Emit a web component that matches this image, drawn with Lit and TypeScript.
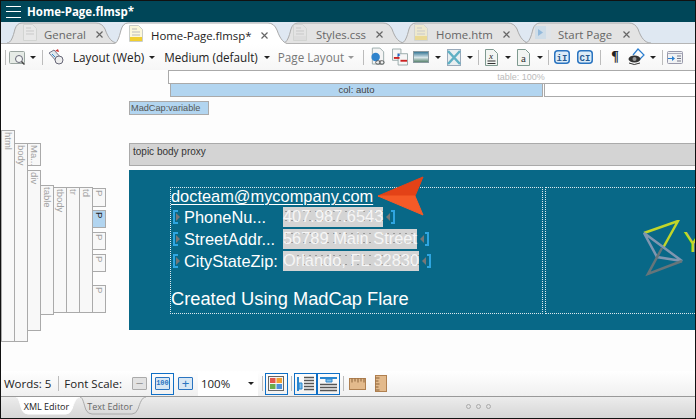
import { LitElement, html, css, svg } from "lit";
import { customElement } from "lit/decorators.js";

const doc = (fill = "#f4f4f4") => svg`<path d="M2.5.5h8l4 4v13h-12z" fill="${fill}" stroke="#9aa" />`;

const icons = {
  find: html`<svg width="17" height="15" viewBox="0 0 17 15"><rect x=".5" y="1.5" width="15" height="12" rx="1" fill="#e6ebe6" stroke="#9aa5a0"/><circle cx="10" cy="9" r="3.5" fill="#f4f6f4" stroke="#667"/><path d="M12.5 11.5l3 3" stroke="#444" stroke-width="1.5"/></svg>`,
  wand: html`<svg width="17" height="18" viewBox="0 0 17 18"><path d="M1 5l5-3 8 9-4 4z" fill="#dfe8ee" stroke="#778"/><circle cx="11" cy="12" r="4" fill="#eee" stroke="#667"/><path d="M7 3l3-2 1 3z" fill="#c33"/><path d="M4 6l3 3" stroke="#38c"/></svg>`,
  link: html`<svg width="16" height="20" viewBox="0 0 17 20">${doc()}<circle cx="6" cy="10" r="4.5" fill="#2f83cc"/><rect x="6" y="14" width="5" height="3.6" rx="1.8" fill="none" stroke="#555"/><rect x="10" y="14" width="5" height="3.6" rx="1.8" fill="none" stroke="#555"/></svg>`,
  xref: html`<svg width="16" height="18" viewBox="0 0 17 18"><path d="M.5.5h9v12h-9z" fill="#f6f6f6" stroke="#9aa"/><path d="M6.5 5.5h10v12h-10z" fill="#f6f6f6" stroke="#9aa"/><path d="M2 10h6" stroke="#c22" stroke-width="2"/><path d="M9 13h7" stroke="#c22" stroke-width="2"/><path d="M6 5l3 2-3 2z" fill="#26c"/></svg>`,
  image: html`<svg width="16" height="12" viewBox="0 0 16 12"><defs><linearGradient id="sky" x1="0" y1="0" x2="0" y2="1"><stop offset="0" stop-color="#2a6f8f"/><stop offset=".55" stop-color="#d8e6ea"/><stop offset="1" stop-color="#4d7a62"/></linearGradient></defs><rect x=".5" y=".5" width="15" height="11" fill="url(#sky)" stroke="#8a9aa0"/></svg>`,
  media: html`<svg width="14" height="17" viewBox="0 0 14 17"><rect x=".5" y=".5" width="13" height="16" fill="#e8eef0" stroke="#9ab"/><path d="M1 2l12 13M13 2L1 15" stroke="#5fb0c4" stroke-width="2.5"/></svg>`,
  xdoc: html`<svg width="13" height="17" viewBox="0 0 13 17"><path d="M.5.5h8l4 4v12h-12z" fill="#f2f5f2" stroke="#7f9a90"/><text x="6" y="10" font-size="9" text-anchor="middle" font-family="Liberation Serif" font-style="italic" fill="#222">x</text><path d="M2.5 12h8M2.5 14.5h8" stroke="#333"/></svg>`,
  adoc: html`<svg width="13" height="17" viewBox="0 0 13 17"><path d="M.5.5h8l4 4v12h-12z" fill="#f2f5f2" stroke="#7f9a90"/><text x="6.5" y="13" font-size="11" text-anchor="middle" font-family="Liberation Serif" fill="#333">a</text></svg>`,
  inline: html`<svg width="16" height="14" viewBox="0 0 16 14"><rect x=".75" y=".75" width="14.5" height="12.5" rx="3" fill="#dcecf8" stroke="#2a74c0" stroke-width="1.5"/><text x="8" y="10.5" font-size="9" font-weight="700" text-anchor="middle" font-family="Liberation Mono" fill="#26588f">iI</text></svg>`,
  block: html`<svg width="16" height="14" viewBox="0 0 16 14"><rect x=".75" y=".75" width="14.5" height="12.5" rx="3" fill="#dcecf8" stroke="#2a74c0" stroke-width="1.5"/><text x="8" y="10.5" font-size="9" font-weight="700" text-anchor="middle" font-family="Liberation Mono" fill="#26588f">CI</text></svg>`,
  eye: html`<svg width="17" height="19" viewBox="0 0 17 19"><path d="M5 7l5-6 6 6-5 5" fill="none" stroke="#2b7ed0" stroke-width="1.2"/><ellipse cx="6.5" cy="11" rx="6" ry="3.5" fill="#333"/><circle cx="6.5" cy="11" r="2" fill="#999"/><path d="M1 15q5 3 11 0" fill="none" stroke="#333"/></svg>`,
  panel: html`<svg width="16" height="13" viewBox="0 0 16 13"><rect x=".5" y=".5" width="15" height="12" rx="1" fill="#f0f2f4" stroke="#99a"/><path d="M.5 2.5h15" stroke="#aab"/><path d="M1 7h4V5l3 2.5L5 10V8H1z" fill="#2a7fd0"/><path d="M10 5h4M10 7.5h4M10 10h4" stroke="#778"/></svg>`,
  grid: html`<svg width="16" height="15" viewBox="0 0 16 15"><rect x=".5" y=".5" width="15" height="14" fill="#f4f4f4" stroke="#666"/><rect x="2" y="2" width="5.5" height="5" fill="#e2574c"/><rect x="8.5" y="2" width="5.5" height="5" fill="#f0a030"/><rect x="2" y="8" width="5.5" height="5" fill="#6aab4c"/><rect x="8.5" y="8" width="5.5" height="5" fill="#4c8fdb"/></svg>`,
  rowTree: html`<svg width="19" height="16" viewBox="0 0 19 16"><path d="M1 1h2v14H1z" fill="#2a86d0"/><path d="M3 7h3v6H3z" fill="#7fc0ea" stroke="#2a86d0"/><path d="M8 1.5h10M8 4.5h10M8 7.5h10M8 10.5h10M8 13.5h10" stroke="#555" stroke-width="1.6"/></svg>`,
  colTree: html`<svg width="19" height="16" viewBox="0 0 19 16"><path d="M1 1h17v2H1z" fill="#2a86d0"/><path d="M7 3h6v3H7z" fill="#7fc0ea" stroke="#2a86d0"/><path d="M1 8.5h17M1 11.5h17M1 14.5h17" stroke="#555" stroke-width="1.6"/></svg>`,
  rulerH: html`<svg width="17" height="12" viewBox="0 0 17 12"><rect x=".5" y=".5" width="16" height="11" fill="#e3ba8c" stroke="#b08050"/><path d="M3 .5v4M6 .5v3M9 .5v4M12 .5v3M15 .5v4" stroke="#8a6238"/></svg>`,
  rulerV: html`<svg width="12" height="17" viewBox="0 0 12 17"><rect x=".5" y=".5" width="11" height="16" fill="#e3ba8c" stroke="#b08050"/><path d="M.5 3h4M.5 6h3M.5 9h4M.5 12h3M.5 15h4" stroke="#8a6238"/></svg>`,
  close: html`<svg width="7" height="7" viewBox="0 0 7 7"><path d="M.5.5l6 6M6.5.5l-6 6" stroke="#666" stroke-width="1.2"/></svg>`,
};

const tabDoc = (fill: string, band: string) =>
  html`<svg width="14" height="17" viewBox="0 0 14 17"><path d="M.5.5h9l4 4v12H.5z" fill="${fill}" stroke="#c9cdc9"/><path d="M3 4h5M3 7h8M3 10h8" stroke="#bbb"/><rect x="1" y="12" width="12" height="4" fill="${band}"/></svg>`;

const startIcon = html`<svg width="16" height="13" viewBox="0 0 16 13"><rect width="16" height="13" fill="#c5daec"/><rect x="11" width="5" height="13" fill="#dfe6ec"/><path d="M3 3l5 3.5L3 10z" fill="#6aa5d8"/></svg>`;

// outline of a document tab, stretched to whatever box it sits in
const tabShape = (w: number, h: number, fill: string, stroke: string) =>
  html`<svg class="shape" viewBox="0 0 ${w} ${h}" preserveAspectRatio="none">
    <path
      d="M0 ${h}C4 ${h} 6 ${h - 6} 8 ${h - 14}Q10 1 15 1H${w - 22}Q${w - 16} 1 ${w - 13} ${h - 14}C${w - 10} ${h - 5} ${w - 6} ${h} ${w} ${h}"
      fill="${fill}"
      stroke="${stroke}"
    />
  </svg>`;

const bottomShape = (w: number, fill: string, stroke: string) =>
  html`<svg class="shape" viewBox="0 0 ${w} 18" preserveAspectRatio="none">
    <path d="M0 0C3 0 4 8 6 13Q8 17 12 17H${w - 14}Q${w - 10} 17 ${w - 8} 12C${w - 6} 6 ${w - 4} 0 ${w} 0" fill="${fill}" stroke="${stroke}" />
  </svg>`;

const DOC_TABS = [
  { name: "General", width: 111, overlap: 0, pad: 16, gap: 7, right: 15, icon: tabDoc("#ececec", "#ececec") },
  { name: "Home-Page.flmsp*", width: 177, overlap: 5, pad: 16, gap: 8, right: 22, icon: tabDoc("#fbf7da", "#f1cf2f"), on: true },
  { name: "Styles.css", width: 122, overlap: 7, pad: 10, gap: 9, right: 22, icon: tabDoc("#e4e4e4", "#d9d9d9") },
  { name: "Home.htm", width: 129, overlap: 4, pad: 13, gap: 8, right: 20, icon: tabDoc("#f3ecc4", "#eed56c") },
  { name: "Start Page", width: 126, overlap: 5, pad: 10, gap: 7, right: 21, icon: startIcon },
];

// [label, left, top, width, height, selected]
const CRUMBS: Array<[string, number, number, number, number, boolean?]> = [
  ["html", 1, 60, 14, 212],
  ["body", 14, 73, 14, 199],
  ["Ma...", 27, 73, 14, 23],
  ["div", 27, 100, 14, 161],
  ["table", 40, 115, 14, 130],
  ["tbody", 53, 117, 14, 126],
  ["tr", 66, 117, 14, 126],
  ["td", 79, 117, 14, 126],
  ["P", 92, 118, 14, 19],
  ["P", 92, 140, 14, 18, true],
  ["P", 92, 162, 14, 18],
  ["P", 92, 184, 14, 18],
  ["P", 92, 215, 14, 28],
];

const FIELDS = [
  ["PhoneNu...", "407.987.6543"],
  ["StreetAddr...", "56789 Main Street"],
  ["CityStateZip:", "Orlando, FL 32830"],
];

@customElement("app-root")
export class AppRoot extends LitElement {
  static styles = css`
    :host {
      display: block;
      width: 696px;
      height: 419px;
      overflow: hidden;
      background: #fdfdfd;
      font-family: "Open Sans", "Noto Sans", sans-serif;
      color: #222;
    }
    .frame {
      height: 419px;
      display: flex;
      flex-direction: column;
      border: 1px solid #111;
      box-sizing: border-box;
      position: relative;
      overflow: hidden;
    }
    .title {
      height: 21px;
      flex: none;
      background: #004658;
      color: #fff;
      display: flex;
      align-items: center;
      gap: 6px;
      padding-left: 5px;
      font: 700 11.5px "Open Sans", sans-serif;
    }
    .burger {
      width: 15px;
      height: 12px;
      border-top: 1px solid #fff;
      border-bottom: 1px solid #fff;
      position: relative;
      box-sizing: border-box;
    }
    .burger::after {
      content: "";
      position: absolute;
      left: 0;
      right: 0;
      top: 4px;
      height: 1px;
      background: #fff;
    }
    .tabs {
      height: 22px;
      flex: none;
      background: #dfe8f2;
      border-bottom: 1px solid #b5b5b5;
      display: flex;
      align-items: flex-start;
      padding-left: 6px;
      box-sizing: border-box;
      font-size: 11.4px;
    }
    .tab {
      display: flex;
      align-items: center;
      flex: none;
      height: 21px;
      color: #666;
      box-sizing: border-box;
      position: relative;
      white-space: nowrap;
    }
    .tab.on {
      color: #222;
      height: 22px;
      z-index: 1;
    }
    .tab > * {
      position: relative;
      top: 2px;
    }
    .tab > .shape,
    .btab > .shape {
      position: absolute;
      left: 0;
      top: 0;
      width: 100%;
      height: 100%;
    }
    .tab > .ico {
      display: flex;
      opacity: 0.65;
      top: 0;
    }
    .tab.on > .ico {
      opacity: 1;
    }
    .tab > .x {
      display: flex;
      margin-left: auto;
    }
    .toolbar {
      height: 26px;
      flex: none;
      background: linear-gradient(#fff, #f6f6f6);
      display: flex;
      align-items: center;
      font-size: 11.7px;
      white-space: nowrap;
    }
    .slot {
      display: flex;
      align-items: center;
      flex: none;
    }
    .sep {
      width: 1px;
      height: 15px;
      background: #bcbcbc;
      flex: none;
    }
    .caret {
      width: 0;
      height: 0;
      border: 3px solid transparent;
      border-top: 3px solid #222;
      border-bottom: 0;
      flex: none;
    }
    .caret.dim {
      border-top-color: #999;
    }
    .muted {
      color: #777;
    }
    .pilcrow {
      width: 10px;
      justify-content: center;
      font: 700 14px "Liberation Serif", serif;
    }
    .stage {
      flex: 1;
      position: relative;
      margin-left: -1px;
      background: #fdfdfd;
      font-family: "Liberation Sans", Arial, sans-serif;
    }
    .proxy {
      position: absolute;
      box-sizing: border-box;
      font-size: 10px;
      border: 1px solid #aaa;
      color: #444;
      white-space: nowrap;
    }
    .table-bar {
      left: 168px;
      top: 0;
      width: 706px;
      height: 14px;
      background: #fff;
      color: #bbb;
      font-size: 9px;
      text-align: center;
      line-height: 13px;
    }
    .col-a {
      left: 170px;
      top: 13px;
      width: 373px;
      height: 14px;
      background: #b2d5f0;
      text-align: center;
      line-height: 12px;
      font-size: 9.5px;
    }
    .col-b {
      left: 544px;
      top: 13px;
      width: 160px;
      height: 14px;
      background: #fff;
    }
    .var {
      left: 129px;
      top: 31px;
      width: 80px;
      height: 14px;
      background: #b2d5f0;
      line-height: 12px;
      padding-left: 1px;
      color: #555;
      font-size: 9.2px;
    }
    .body-bar {
      left: 129px;
      top: 73px;
      width: 575px;
      height: 23px;
      background: #d4d4d4;
      line-height: 16px;
      padding-left: 3px;
      color: #333;
    }
    .crumb {
      position: absolute;
      box-sizing: border-box;
      background: #f8f8f8;
      border: 1px solid #aaa;
      color: #a0a0a0;
      font-size: 9.5px;
      writing-mode: vertical-rl;
      padding-top: 1px;
      line-height: 11px;
      white-space: nowrap;
      overflow: hidden;
    }
    .crumb.sel {
      background: #b2d5f0;
      color: #222;
    }
    .banner {
      position: absolute;
      left: 129px;
      top: 100px;
      width: 575px;
      height: 160px;
      background: #086887;
      color: #fff;
    }
    .cell {
      position: absolute;
      top: 17px;
      height: 127px;
      box-sizing: border-box;
      border: 1px dotted #dfe9ee;
    }
    .cell.a {
      left: 41px;
      width: 373px;
    }
    .cell.b {
      left: 416px;
      width: 170px;
    }
    .content {
      position: absolute;
      left: 42px;
      top: 17px;
      display: flex;
      flex-direction: column;
      font-size: 16.4px;
    }
    .email {
      line-height: 19px;
      text-decoration: underline;
      text-underline-offset: 2px;
      text-decoration-thickness: 1px;
      white-space: nowrap;
    }
    .row {
      display: flex;
      align-items: center;
      height: 22px;
    }
    .bracket {
      display: flex;
      align-items: center;
      width: 5px;
      height: 14px;
      border: 2px solid #2fa5e0;
      box-sizing: border-box;
      border-right: 0;
      margin-left: 2px;
      flex: none;
    }
    .bracket.end {
      border-right: 2px solid #2fa5e0;
      border-left: 0;
      margin-left: 0;
      width: 4px;
    }
    .tri {
      width: 0;
      height: 0;
      flex: none;
      border: 4px solid transparent;
      border-left: 4px solid #777;
      border-right: 0;
      margin-left: 1px;
    }
    .tri.end {
      border-left: 0;
      border-right: 4px solid #777;
      margin: 0 1px 0 3px;
    }
    .lab {
      width: 99px;
      margin-left: 6px;
      flex: none;
      white-space: nowrap;
    }
    .val {
      background-color: #d4d4d4;
      background-image: radial-gradient(#9a9a9a 0.5px, transparent 0.7px);
      background-size: 6px 9px;
      height: 20px;
      line-height: 19px;
      white-space: nowrap;
      color: #f6f6f6;
    }
    .made {
      font-size: 18.3px;
      margin-top: 16px;
      line-height: 22px;
      white-space: nowrap;
    }
    .pointer,
    .logo {
      position: absolute;
    }
    .pointer {
      left: 376px;
      top: 175px;
    }
    .logo {
      left: 640px;
      top: 219px;
    }
    .status {
      height: 25px;
      flex: none;
      background: linear-gradient(#fff, #f0f0f0);
      display: flex;
      align-items: center;
      font-size: 11.5px;
      white-space: nowrap;
    }
    .btn {
      box-sizing: border-box;
      width: 23px;
      height: 22px;
      display: flex;
      align-items: center;
      justify-content: center;
      flex: none;
    }
    .btn.act {
      border: 1px solid #0f6fc6;
    }
    .sq {
      width: 15px;
      height: 13px;
      box-sizing: border-box;
      border: 1px solid #2a74c0;
      background: #d8e7f4;
      border-radius: 1px;
      display: flex;
      align-items: center;
      justify-content: center;
      color: #2a74c0;
      font: 13px/1 "Liberation Sans", sans-serif;
    }
    .sq.off {
      border-color: #aaa;
      background: #e2e2e2;
      color: #999;
    }
    .sq.on {
      font: 700 7px/1 "Liberation Mono", monospace;
    }
    .zoom {
      width: 60px;
      height: 24px;
      background: #fff;
      display: flex;
      align-items: center;
      justify-content: space-between;
      padding: 0 4px 0 3px;
      box-sizing: border-box;
      flex: none;
    }
    .bottom {
      height: 22px;
      flex: none;
      background: linear-gradient(#ececec, #d6d6d6);
      border-top: 1px solid #999;
      box-sizing: border-box;
      display: flex;
      align-items: flex-start;
      padding-left: 15px;
      position: relative;
      font-size: 9px;
    }
    .btab {
      height: 18px;
      display: flex;
      align-items: center;
      justify-content: center;
      box-sizing: border-box;
      color: #666;
      position: relative;
      flex: none;
    }
    .btab.on {
      width: 64px;
      padding-right: 3px;
      color: #222;
      z-index: 1;
    }
    .btab.off {
      width: 66px;
      padding-right: 6px;
    }
    .btab span {
      position: relative;
    }
    .dots {
      position: absolute;
      left: 465px;
      top: 7px;
      display: flex;
      gap: 5px;
    }
    .dots i {
      width: 5px;
      height: 5px;
      border-radius: 50%;
      box-sizing: border-box;
      border: 1px solid #aaa;
    }
  `;

  private at(ml: number, content: unknown) {
    return html`<span class="slot" style="margin-left:${ml}px">${content}</span>`;
  }

  private get caret() {
    return html`<span class="caret"></span>`;
  }

  private get sep() {
    return html`<span class="sep"></span>`;
  }

  render() {
    return html`
      <div class="frame">
        <div class="title"><span class="burger"></span>Home-Page.flmsp*</div>
        <div class="tabs">
          ${DOC_TABS.map(
            (t) => html`<div
              class="tab ${t.on ? "on" : ""}"
              style="width:${t.width}px;margin-left:-${t.overlap}px;padding:0 ${t.right}px 0 ${t.pad}px"
            >
              ${t.on
                ? tabShape(t.width, 22, "#fff", "#aaa")
                : tabShape(t.width, 21, "#e3e3e3", "#aaa")}
              <span class="ico">${t.icon}</span>
              <span style="margin-left:${t.gap}px">${t.name}</span>
              <span class="x">${icons.close}</span>
            </div>`
          )}
        </div>
        <div class="toolbar">
          ${this.at(4, this.sep)} ${this.at(3, icons.find)} ${this.at(4, this.caret)}
          ${this.at(6, this.sep)} ${this.at(5, icons.wand)}
          ${this.at(8, "Layout (Web)")} ${this.at(5, this.caret)}
          ${this.at(9, "Medium (default)")} ${this.at(6, this.caret)}
          ${this.at(8, html`<span class="muted">Page Layout</span>`)}
          ${this.at(4, html`<span class="caret dim"></span>`)}
          ${this.at(9, this.sep)} ${this.at(6, icons.link)} ${this.at(6, icons.xref)}
          ${this.at(5, icons.image)} ${this.at(6, this.caret)}
          ${this.at(6, icons.media)} ${this.at(6, this.caret)}
          ${this.at(5, this.sep)} ${this.at(6, icons.xdoc)} ${this.at(7, this.caret)}
          ${this.at(6, icons.adoc)} ${this.at(7, this.caret)}
          ${this.at(5, this.sep)} ${this.at(5, icons.inline)} ${this.at(7, icons.block)}
          ${this.at(7, this.sep)}
          <span class="slot pilcrow" style="margin-left:9px">¶</span>
          ${this.at(8, icons.eye)} ${this.at(5, this.caret)}
          ${this.at(6, this.sep)} ${this.at(4, icons.panel)}
        </div>
        <div class="stage">
          <div class="proxy table-bar">table: 100%</div>
          <div class="proxy col-a">col: auto</div>
          <div class="proxy col-b"></div>
          <div class="proxy var">MadCap:variable</div>
          <div class="proxy body-bar">topic body proxy</div>
          ${CRUMBS.map(
            ([t, x, y, w, h, sel]) => html`<div
              class="crumb ${sel ? "sel" : ""}"
              style="left:${x}px;top:${y}px;width:${w}px;height:${h}px"
            >${t}</div>`
          )}
          <div class="banner">
            <div class="cell a"></div>
            <div class="cell b"></div>
            <div class="content">
              <div class="email">docteam@mycompany.com</div>
              ${FIELDS.map(
                ([label, value]) => html`<div class="row">
                  <span class="bracket"><span class="tri"></span></span>
                  <span class="lab">${label}</span>
                  <span class="val">${value}</span>
                  <span class="tri end"></span><span class="bracket end"></span>
                </div>`
              )}
              <div class="made">Created Using MadCap Flare</div>
            </div>
          </div>
        </div>
        <svg class="pointer" width="50" height="42" viewBox="0 0 50 42">
          <path d="M1 20L46 1l-8 19z" fill="#e34217" stroke="#e34217" stroke-linejoin="round" />
          <path d="M1 20h37l8 19z" fill="#f55a27" stroke="#f55a27" stroke-linejoin="round" />
        </svg>
        <svg class="logo" width="56" height="58" viewBox="0 0 56 58">
          <path d="M3 13L37 1 22 28" fill="none" stroke="#c1d52a" stroke-width="2.5" />
          <path d="M3 13l13 24 25 4z" fill="none" stroke="#7f96b0" stroke-width="2.5" />
          <path d="M21 28L7 54l34-13" fill="none" stroke="#66757a" stroke-width="2.5" />
          <text x="42" y="32" font-size="29" font-family="Liberation Sans" fill="#c1d52a">Y</text>
        </svg>
        <div class="status">
          ${this.at(3, "Words: 5")} ${this.at(7, this.sep)} ${this.at(5, "Font Scale:")}
          ${this.at(10, html`<span class="sq off">−</span>`)}
          ${this.at(4, html`<span class="btn act"><span class="sq on">100</span></span>`)}
          ${this.at(4, html`<span class="sq">+</span>`)}
          ${this.at(5, html`<span class="zoom">100%<span class="caret"></span></span>`)}
          ${this.at(4, this.sep)}
          ${this.at(2, html`<span class="btn act">${icons.grid}</span>`)}
          ${this.at(3, this.sep)}
          ${this.at(2, html`<span class="btn act">${icons.rowTree}</span>`)}
          ${this.at(0, html`<span class="btn act">${icons.colTree}</span>`)}
          ${this.at(3, this.sep)} ${this.at(5, icons.rulerH)} ${this.at(9, icons.rulerV)}
        </div>
        <div class="bottom">
          <div class="btab on">${bottomShape(64, "#fff", "#fff")}<span>XML Editor</span></div>
          <div class="btab off">${bottomShape(66, "none", "#aaa")}<span>Text Editor</span></div>
          <div class="dots"><i></i><i></i><i></i></div>
        </div>
      </div>
    `;
  }
}
